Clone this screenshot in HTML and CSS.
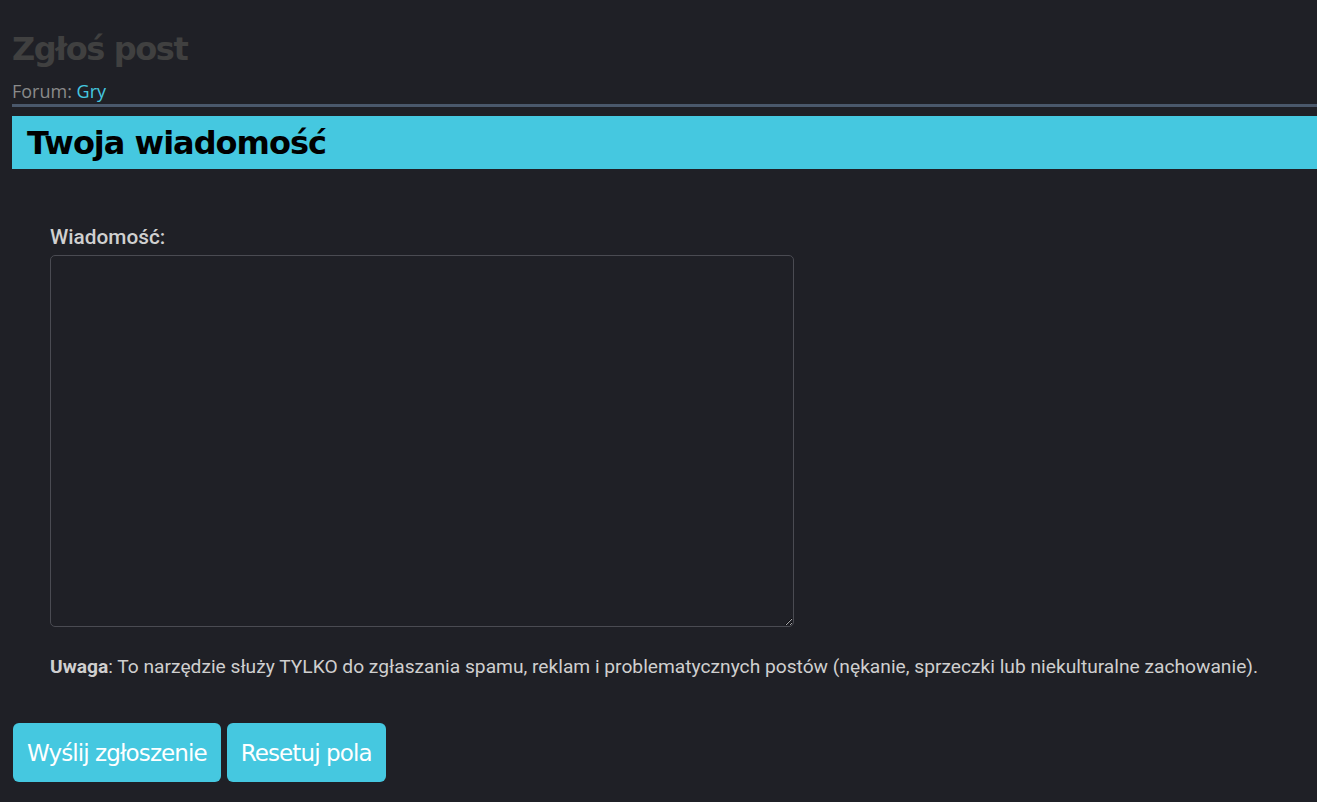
FILE: index.html
```html
<!DOCTYPE html>
<html lang="pl">
<head>
<meta charset="utf-8">
<title>Zgłoś post</title>
<link rel="stylesheet" href="styles.css">
</head>
<body>
<div class="page">
  <h1 class="title">Zgłoś post</h1>
  <div class="forum">Forum: <a href="#" class="forum-link">Gry</a></div>
  <div class="section-head">Twoja wiadomość</div>
  <div class="form-body">
    <label class="label" for="msg">Wiadomość:</label>
    <textarea id="msg" class="textarea"></textarea>
    <p class="note"><b>Uwaga</b>: To narzędzie służy TYLKO do zgłaszania spamu, reklam i problematycznych postów (nękanie, sprzeczki lub niekulturalne zachowanie).</p>
  </div>
  <div class="buttons">
    <button class="btn">Wyślij zgłoszenie</button>
    <button class="btn">Resetuj pola</button>
  </div>
</div>
</body>
</html>
```
FILE: styles.css
```css
html, body {
  margin: 0;
  padding: 0;
  background: #1f2026;
  height: 100%;
}
.page {
  padding: 29px 0 0 12px;
  font-family: Roboto, "Liberation Sans", sans-serif;
}
.title {
  margin: 0;
  font-family: "DejaVu Sans", sans-serif;
  font-weight: bold;
  font-size: 32px;
  letter-spacing: -1.4px;
  line-height: 40px;
  color: #404040;
}
.forum {
  margin-top: 10px;
  font-family: "Open Sans", sans-serif;
  font-size: 18px;
  line-height: 25px;
  color: #8a8a8a;
}
.forum-link {
  color: #45c8e0;
  text-decoration: none;
}
.section-head {
  border-top: 3px solid #4a586b;
  padding-top: 9px;
  background: linear-gradient(#1f2026 0 9px, #45c8e0 9px);
  height: 53px;
  padding-left: 15px;
  font-family: "DejaVu Sans", sans-serif;
  font-weight: bold;
  font-size: 32px;
  letter-spacing: -1px;
  line-height: 55px;
  color: #000;
}
.form-body {
  padding: 56px 0 0 38px;
}
.label {
  display: block;
  font-weight: 500;
  font-size: 20.8px;
  line-height: 25px;
  color: #d0d0d0;
  margin-bottom: 5px;
}
.textarea {
  display: block;
  width: 744px;
  height: 372px;
  box-sizing: border-box;
  background: #1f2026;
  border: 1px solid #4a4b52;
  border-radius: 5px;
  color: #ddd;
  color-scheme: dark;
  margin: 0;
}
.note {
  margin: 26px 0 0;
  font-size: 19.2px;
  line-height: 28px;
  color: #cfcfcf;
}
.note b {
  font-weight: bold;
}
.buttons {
  display: flex;
  gap: 6px;
  margin-top: 42px;
  padding-left: 1px;
}
.btn {
  background: #45c8e0;
  border: none;
  border-radius: 6px;
  height: 59px;
  padding: 0 14px;
  font-family: "DejaVu Sans", sans-serif;
  font-size: 23px;
  letter-spacing: -0.9px;
  color: #fff;
  cursor: pointer;
}
```
